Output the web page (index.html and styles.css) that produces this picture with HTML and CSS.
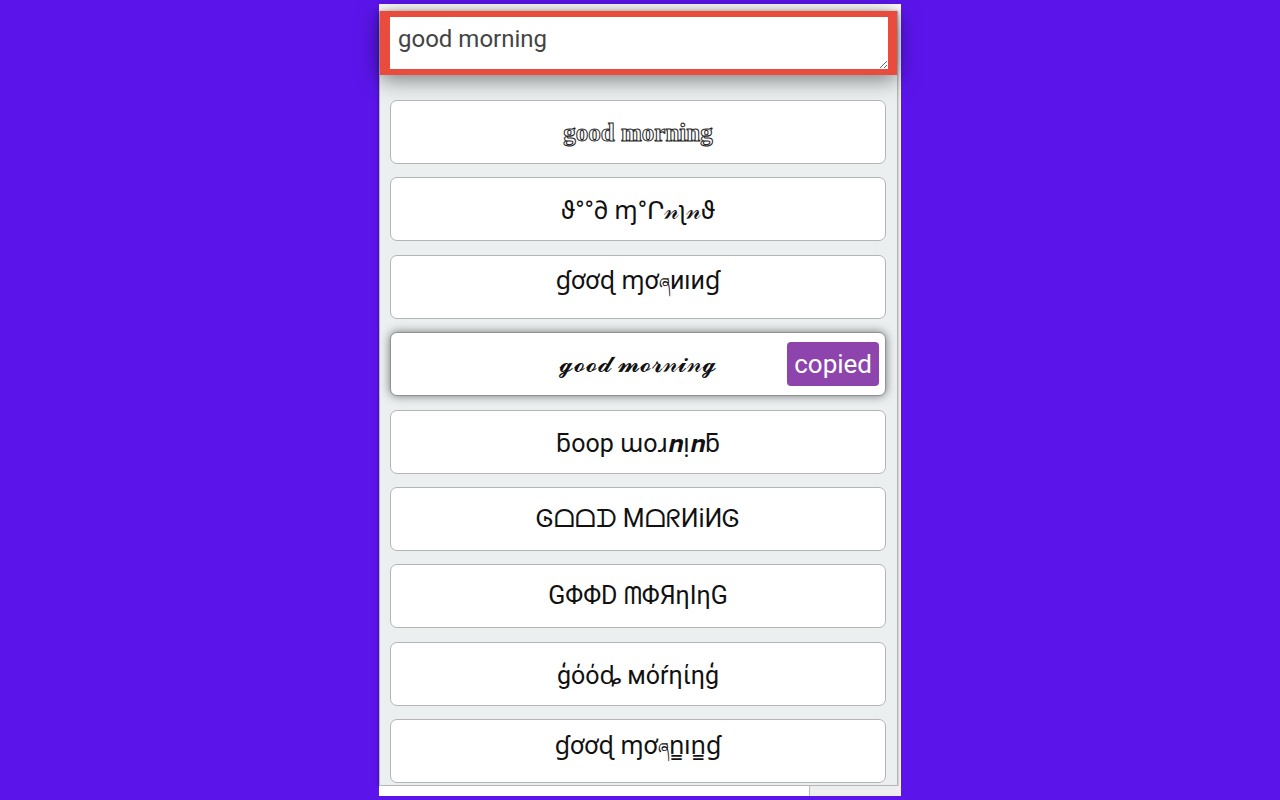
FILE: index.html
```
<!DOCTYPE html>
<html lang="en">
<head>
  <meta charset="UTF-8" />
  <meta name="viewport" content="width=device-width, initial-scale=1.0"/>
  <title>Fancy text</title>
  <link rel="stylesheet" href="styles.css">
</head>
<body>
  <div class="frame">
    <div class="popup">
      <div class="input-bar">
        <textarea class="source" id="source" aria-label="Your text" spellcheck="false">good morning</textarea>
      </div>

      <div class="styles-list">
        <button class="item"><span class="outline">good morning</span></button>
        <button class="item">ϑ°°∂ ɱ°Ր𝓃ʅ𝓃ϑ</button>
        <button class="item">ɠơơɖ ɱơ<span class="small">ཞ</span>иıиɠ</button>
        <button class="item active">𝓰𝓸𝓸𝓭 𝓶𝓸𝓻𝓃𝓲𝓃𝓰 <span class="copied">copied</span></button>
        <button class="item">ƃoop ɯoɹ𝒏ᴉ𝒏ƃ</button>
        <button class="item">Ꮆᗝᗝᗪ MᗝᖇИiИᎶ</button>
        <button class="item">GΦΦD ᗰΦЯηIηG</button>
        <button class="item">ģόόȡ мόŕηίηģ</button>
        <button class="item">ɠơơɖ ɱơ<span class="small">ཞ</span>n̳ın̳ɠ</button>
      </div>
    </div>
    <div class="page-edge"></div>
  </div>
</body>
</html>
```
FILE: styles.css
```
* {
  box-sizing: border-box;
}

body {
  font-family: Roboto, "Noto Sans", "DejaVu Sans", sans-serif;
  margin: 0;
  padding: 4px 0;
  min-height: 100vh;
  display: flex;
  justify-content: center;
  background: #5b15eb;
}

.frame {
  width: 100%;
  max-width: 522px;
  padding: 7px 3px 0 0;
  display: flex;
  flex-direction: column;
  background: #fff;
}

.popup {
  flex: 1;
  display: flex;
  flex-direction: column;
  border: 1px solid #b4b6b6;
  border-top: none;
  background: #ebeff0;
  box-shadow: 0 1px 4px rgba(0,0,0,0.4);
}

.input-bar {
  padding: 6px 9px 6px 10px;
  background: #e94b3c;
  box-shadow: 0 4px 22px rgba(0,0,0,0.5);
}

.source {
  display: block;
  width: 100%;
  height: 52px;
  padding: 7px 8px;
  border: none;
  outline: none;
  background: #fff;
  color: #444;
  font-family: inherit;
  font-size: 24px;
  line-height: 30px;
}

.styles-list {
  flex: 1;
  display: flex;
  flex-direction: column;
  justify-content: space-between;
  padding: 25px 11px 2px 10px;
}

.item {
  position: relative;
  height: 64px;
  padding: 0 10px;
  border: 1px solid #b2b4b5;
  border-radius: 7px;
  background: #fff;
  color: #111;
  font-family: inherit;
  font-size: 25px;
  cursor: pointer;
}

.item.active {
  border-color: #8f9292;
  box-shadow: 0 0 10px rgba(0,0,0,0.5);
}

.outline {
  font-family: "Liberation Serif", serif;
  font-weight: bold;
  color: #fff;
  -webkit-text-stroke: 1px #222;
}

.small {
  font-size: 16px;
}

.copied {
  position: absolute;
  top: 9px;
  right: 6px;
  padding: 6px 7px;
  border-radius: 4px;
  background: #8e44ad;
  color: #fff;
  font-size: 26px;
  line-height: 32px;
}

.page-edge {
  height: 10px;
  margin-right: -3px;
  background: linear-gradient(to right, #fff 430px, #bbb 430px, #bbb 431px, #eee 431px);
}
```
